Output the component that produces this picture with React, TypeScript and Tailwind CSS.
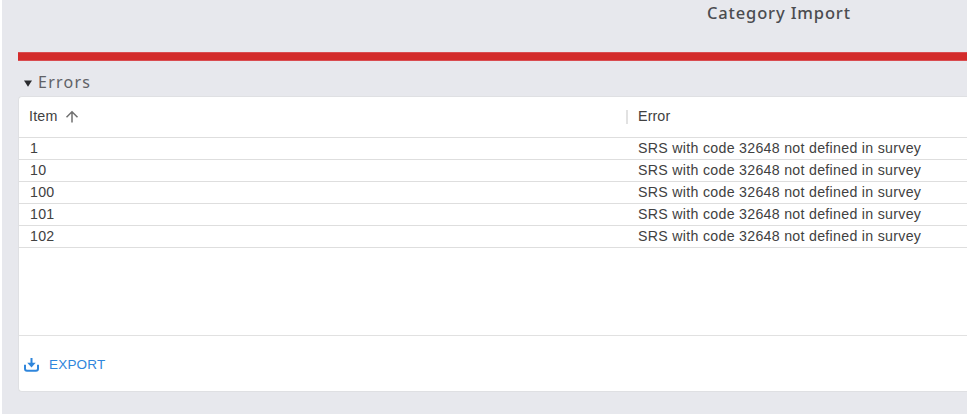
const items = ['1', '10', '100', '101', '102'];

export default function App() {
  return (
    <div className="h-[414px] w-[967px] overflow-hidden bg-white pl-[2px] font-['Liberation_Sans',Arial,sans-serif] text-[#414141]">
      <div className="flex h-full flex-col bg-[#e7e8ed] pl-4">
        <header className="h-[52px] shrink-0 pl-[689px] pt-px font-['Noto_Sans',sans-serif] text-[16.5px] font-medium leading-6 tracking-[0.85px] text-[#4b4c50]">
          <span className="whitespace-nowrap">Category Import</span>
        </header>
        <div className="h-[9px] shrink-0 border-y border-[#d94c50] bg-[#d32b2b]" />
        <div className="flex h-[35px] shrink-0 items-center pl-[6px] pt-[6px] font-['Noto_Sans',sans-serif] text-[16px] tracking-[1.25px] text-[#606166]">
          <svg className="mr-[6px] mt-[3px]" width="8" height="7" viewBox="0 0 8 7" fill="#292a2e">
            <path d="M0 0.4h8L4 6.8z" />
          </svg>
          <span>Errors</span>
        </div>
        <section className="flex h-[296px] shrink-0 flex-col rounded-l-[4px] border-y border-l border-[#dfe0e3] bg-white">
          <div className="flex h-[41px] shrink-0 items-center border-b border-[#dedede] text-[14.3px]">
            <div className="flex w-[607px] items-center pl-[10px]">
              <span className="tracking-[0.2px]">Item</span>
              <svg className="ml-[7px]" width="14" height="14" viewBox="0 0 14 14" fill="none" stroke="#707070" strokeWidth="1.5">
                <path d="M7 12.5V2M1.5 7.3L7 1.8l5.5 5.5" />
              </svg>
            </div>
            <div className="h-[14px] w-[2px] bg-[#e2e2e2]" />
            <span className="pl-[10px] tracking-[0.1px]">Error</span>
          </div>
          {items.map((item) => (
            <div key={item} className="flex h-[22px] shrink-0 items-center border-b border-[#dedede] text-[14.2px] leading-[19px] tracking-[0.29px]">
              <span className="w-[619px] pl-[11px]">{item}</span>
              <span className="whitespace-nowrap">SRS with code 32648 not defined in survey</span>
            </div>
          ))}
          <div className="grow" />
          <footer className="flex h-[56px] shrink-0 items-center border-t border-[#e1e1e1] pl-[5px] pt-[3px] text-[#2f86dc]">
            <svg width="15" height="14" viewBox="0 0 15 14" fill="none" stroke="currentColor" strokeWidth="2">
              <path d="M1 6.8v4q0 2 2 2h9q2 0 2-2v-4M7.5 0v6" />
              <path d="M3.3 4.8h8.4L7.5 9.6z" fill="currentColor" stroke="none" />
            </svg>
            <span className="ml-[10px] text-[13.5px] tracking-[0.2px]">EXPORT</span>
          </footer>
        </section>
      </div>
    </div>
  );
}
